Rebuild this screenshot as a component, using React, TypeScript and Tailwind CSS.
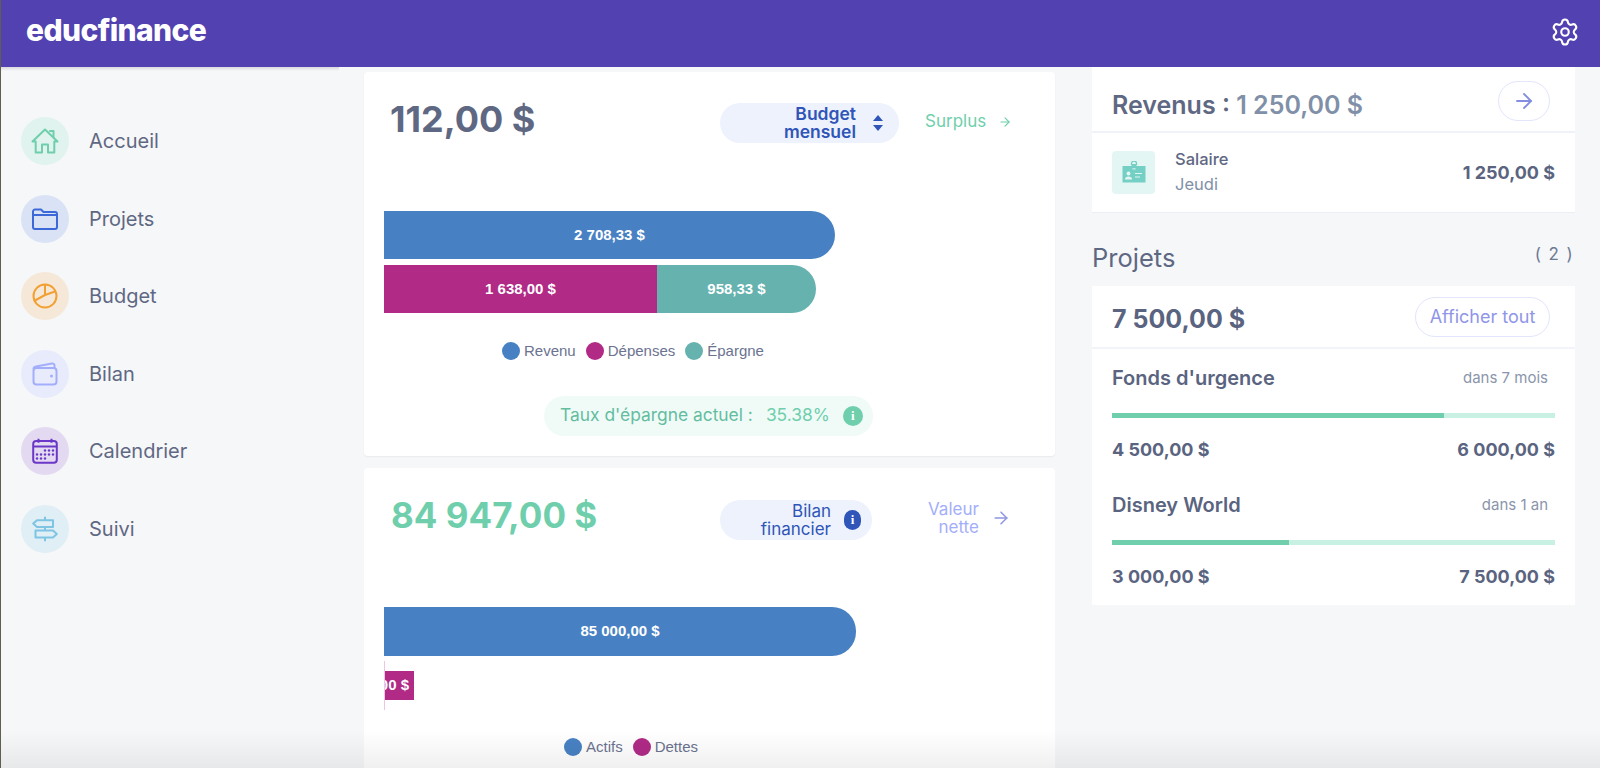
import { Settings, ArrowRight } from 'lucide-react';
import type { ReactNode } from 'react';

const HomeIcon = () => (
  <svg width="28" height="26" viewBox="0 0 28 26" fill="none" stroke="#6fcfac" strokeWidth="2" strokeLinejoin="round" strokeLinecap="round">
    <path d="M1.5 13.5 14 1.5l12.5 12h-3.2V24.5H17V16.5h-6v8H4.700V13.500z" />
    <path d="M19 3h3.500v6.500" />
  </svg>
);

const FolderIcon = () => (
  <svg width="26" height="22" viewBox="0 0 26 22" fill="none" stroke="#3d68d8" strokeWidth="2" strokeLinejoin="round">
    <path d="M1 3.500A2 2 0 0 1 3 1.500h6l2.500 2.500H23a2 2 0 0 1 2 2v13a2 2 0 0 1-2 2H3a2 2 0 0 1-2-2z" />
    <path d="M1 7h24" />
  </svg>
);

const PieIcon = () => (
  <svg width="26" height="26" viewBox="0 0 26 26" fill="none" stroke="#f2a033" strokeWidth="2" strokeLinejoin="round">
    <circle cx="13" cy="13" r="11.500" />
    <path d="M13 1.500V12L3 17.500" />
    <path d="M13 12l10-3.500" />
  </svg>
);

const WalletIcon = () => (
  <svg width="26" height="24" viewBox="0 0 26 24" fill="none" stroke="#a3aefb" strokeWidth="2" strokeLinejoin="round">
    <path d="M1.500 7.500A3 3 0 0 1 4 4.500L20 1.500c1.500-.2 2.500.7 2.500 2v2.500" />
    <rect x="1.500" y="6" width="23" height="16.500" rx="3" />
    <circle cx="19.500" cy="14" r="1.500" fill="#a3aefb" stroke="none" />
  </svg>
);

const CalendarIcon = () => (
  <svg width="26" height="26" viewBox="0 0 26 26" fill="none">
    <rect x="1.200" y="3" width="23.600" height="21.800" rx="3" stroke="#6a37c8" strokeWidth="2" />
    <path d="M1.500 8.500h23M6.500 .8v4M19.500 .8v4" stroke="#6a37c8" strokeWidth="2" />
    <g fill="#6a37c8">
      <circle cx="13" cy="12.500" r="1.200" />
      <circle cx="17" cy="12.500" r="1.200" />
      <circle cx="21" cy="12.500" r="1.200" />
      <circle cx="5" cy="16.500" r="1.200" />
      <circle cx="9" cy="16.500" r="1.200" />
      <circle cx="13" cy="16.500" r="1.200" />
      <circle cx="17" cy="16.500" r="1.200" />
      <circle cx="21" cy="16.500" r="1.200" />
      <circle cx="5" cy="20.500" r="1.200" />
      <circle cx="9" cy="20.500" r="1.200" />
      <circle cx="13" cy="20.500" r="1.200" />
    </g>
  </svg>
);

const SignIcon = () => (
  <svg width="26" height="26" viewBox="0 0 26 26" fill="none" stroke="#7fc4e3" strokeWidth="2" strokeLinejoin="round">
    <path d="M13 .8v3.400M13 11v3.500M13 21.500v3.700" />
    <path d="M21 4.200H5L1.200 7.600 5 11h16z" />
    <path d="M3.500 14.500H21l3.800 3.500-3.800 3.500H3.500z" />
  </svg>
);

const BadgeIcon = () => (
  <svg width="24" height="22" viewBox="0 0 24 22">
    <path d="M9.500 4V2.500a2.500 2.500 0 0 1 5 0V4" fill="none" stroke="#74cfc5" strokeWidth="1.300" />
    <rect x="0.500" y="5" width="23" height="16.500" fill="#74cfc5" />
    <rect x="9.500" y="3" width="5" height="3.400" fill="#74cfc5" />
    <rect x="10.400" y="7.400" width="3.200" height="1" fill="#e4f6f4" />
    <circle cx="6.500" cy="12.500" r="1.900" fill="#e4f6f4" />
    <path d="M3 18.500c0-2.200 1.500-3 3.500-3s3.500.8 3.500 3z" fill="#e4f6f4" />
    <path d="M13 12.500h7M13 16h5" stroke="#e4f6f4" strokeWidth="1.100" />
  </svg>
);

const InfoDot = ({ bg, w }: { bg: string; w: string }) => (
  <span className={`flex h-5 shrink-0 items-center justify-center rounded-full text-[13px] font-bold text-white font-['Liberation_Serif',serif] ${w} ${bg}`}>
    i
  </span>
);

const nav: { label: string; bg: string; icon: ReactNode }[] = [
  { label: 'Accueil', bg: 'bg-[#e0f3ee]', icon: <HomeIcon /> },
  { label: 'Projets', bg: 'bg-[#dae3f5]', icon: <FolderIcon /> },
  { label: 'Budget', bg: 'bg-[#f6e8d8]', icon: <PieIcon /> },
  { label: 'Bilan', bg: 'bg-[#e8ebfb]', icon: <WalletIcon /> },
  { label: 'Calendrier', bg: 'bg-[#e3daf1]', icon: <CalendarIcon /> },
  { label: 'Suivi', bg: 'bg-[#e0eff5]', icon: <SignIcon /> },
];

const LegendItem = ({ color, label }: { color: string; label: string }) => (
  <div className="flex items-center gap-[4px]">
    <span className={`h-[18px] w-[18px] rounded-full ${color}`} />
    <span className="font-['Liberation_Sans',sans-serif] text-[15px] text-[#6b7390]">{label}</span>
  </div>
);

const Goal = ({ name, when, start, end, pct, className }: { name: string; when: string; start: string; end: string; pct: number; className?: string }) => (
  <div className={className}>
    <div className="flex items-center justify-between pr-[7px]">
      <span className="text-[20px] font-semibold text-[#5a6480]">{name}</span>
      <span className="text-[15px] text-[#8b95ab]">{when}</span>
    </div>
    <div className="mt-[20px] h-[5px] bg-[#c8f0e3]">
      <div className="h-full bg-[#6fcfac]" style={{ width: `${pct}%` }} />
    </div>
    <div className="mt-[18px] flex items-center justify-between text-[18px] font-bold text-[#5a6480]">
      <span>{start}</span>
      <span>{end}</span>
    </div>
  </div>
);

const App = () => {
  return (
    <div className="relative flex h-screen flex-col overflow-hidden border-l border-l-[#5f5f50] bg-[#f6f7f9] font-['Inter',sans-serif]">
      {/* Header */}
      <header className="flex h-[67px] shrink-0 items-center justify-between bg-[#5241b0] pl-[25px] pr-[20px] text-white">
        <span className="mb-[7px] text-[30px] font-extrabold tracking-[-0.6px]">educfinance</span>
        <Settings className="mb-[3px] h-[30px] w-[30px]" strokeWidth={1.7} />
      </header>

      <div className="flex min-h-0 flex-1">
        {/* Sidebar */}
        <aside className="w-[338px] shrink-0">
          <div className="h-[4px] bg-gradient-to-b from-[#d8d9de] to-transparent" />
          <nav className="flex flex-col gap-[29.600px] pl-[20px] pt-[46px]">
            {nav.map((item) => (
              <div key={item.label} className="flex items-center gap-[20px]">
                <span className={`flex h-[48px] w-[48px] items-center justify-center rounded-full ${item.bg}`}>{item.icon}</span>
                <span className="text-[20px] text-[#5f6883]">{item.label}</span>
              </div>
            ))}
          </nav>
        </aside>

        {/* Center column */}
        <main className="ml-[25px] w-[691px] shrink-0 pt-[5px]">
          <section className="h-[384px] rounded-[4px] bg-white pt-[31px] shadow-[0_1px_2px_rgba(0,0,0,0.06)]">
            <div className="flex items-start">
              <div className="w-[356px] pl-[26px] text-[36px] leading-[32px] font-bold text-[#5f6883]">112,00 $</div>
              <div className="flex h-[40px] w-[179px] items-center justify-end gap-[17px] rounded-full bg-[#edf2fc] pr-[16px]">
                <span className="text-right text-[17.500px] leading-[18px] font-semibold text-[#2f55b8]">
                  Budget
                  <br />
                  mensuel
                </span>
                <span className="flex flex-col gap-[4px]">
                  <span className="h-0 w-0 border-x-[5.500px] border-b-[6px] border-x-transparent border-b-[#2f55b8]" />
                  <span className="h-0 w-0 border-x-[5.500px] border-t-[6px] border-x-transparent border-t-[#2f55b8]" />
                </span>
              </div>
              <div className="ml-[26px] flex h-[40px] items-center gap-[12px] pb-[3px] text-[17px] text-[#6fcfac]">
                Surplus
                <ArrowRight className="h-[14px] w-[14px]" strokeWidth={2} />
              </div>
            </div>

            <div className="ml-[20px] mt-[68px] flex flex-col gap-[6px] font-['Liberation_Sans',sans-serif] text-[15px] font-bold text-white">
              <div className="flex h-[48px] w-[451px] items-center justify-center rounded-r-[24px] bg-[#4881c3]">2 708,33 $</div>
              <div className="flex h-[48px] w-[432px]">
                <div className="flex w-[273px] items-center justify-center bg-[#b02a86]">1 638,00 $</div>
                <div className="flex flex-1 items-center justify-center rounded-r-[24px] bg-[#65b2af]">958,33 $</div>
              </div>
            </div>

            <div className="ml-[138px] mt-[27px] flex items-center gap-[10px]">
              <LegendItem color="bg-[#4881c3]" label="Revenu" />
              <LegendItem color="bg-[#b02a86]" label="Dépenses" />
              <LegendItem color="bg-[#65b2af]" label="Épargne" />
            </div>

            <div className="ml-[180px] mt-[33px] flex h-[40px] w-[329px] items-center rounded-full bg-[#f0fbf8] pl-[16px] text-[17.400px] text-[#64bda0]">
              <span>Taux d'épargne actuel :</span>
              <span className="ml-[13px] text-[#6fcfac]">35.38%</span>
              <span className="ml-[13px]">
                <InfoDot bg="bg-[#6fcfac]" w="w-[20px]" />
              </span>
            </div>
          </section>

          <section className="mt-[12px] h-[340px] rounded-[4px] bg-white pt-[32px]">
            <div className="flex items-start">
              <div className="w-[356px] pl-[27px] text-[35px] leading-[30px] font-bold text-[#6fcfac]">84 947,00 $</div>
              <div className="flex h-[40px] w-[152px] items-center justify-end gap-[13px] rounded-full bg-[#edf2fc] pr-[11px]">
                <span className="text-right text-[17px] leading-[18px] text-[#2f55b8]">
                  Bilan
                  <br />
                  financier
                </span>
                <InfoDot bg="bg-[#2f55b8]" w="w-[17px]" />
              </div>
              <div className="ml-[56px] flex h-[35px] items-center gap-[12px] text-[17px] leading-[18px] text-[#a3aefb]">
                <span className="text-right">
                  Valeur
                  <br />
                  nette
                </span>
                <ArrowRight className="h-[20px] w-[20px] text-[#8f96e0]" strokeWidth={1.800} />
              </div>
            </div>

            <div className="ml-[20px] mt-[67px] font-['Liberation_Sans',sans-serif] text-[15px] font-bold text-white">
              <div className="flex h-[49px] w-[472px] items-center justify-center rounded-r-[24px] bg-[#4881c3]">85 000,00 $</div>
              <div className="mt-[5px] flex h-[49px] items-center border-l border-l-[#f3c4e2]">
                <div className="flex h-[29px] w-[29px] items-center justify-end overflow-hidden whitespace-nowrap bg-[#b02a86] pr-[5px]">53,00 $</div>
              </div>
            </div>

            <div className="ml-[200px] mt-[26px] flex items-center gap-[10px]">
              <LegendItem color="bg-[#4881c3]" label="Actifs" />
              <LegendItem color="bg-[#b02a86]" label="Dettes" />
            </div>
          </section>
        </main>

        {/* Right column */}
        <div className="ml-[37px] w-[483px] shrink-0">
          <section className="border-b border-b-[#eceef5] bg-white">
            <div className="flex h-[66px] items-start justify-between border-b-2 border-b-[#f0f2fa] pl-[20px] pr-[25px] pt-[14px]">
              <span className="mt-[8px] text-[25px] leading-[32px] font-semibold text-[#5f6883]">
                Revenus : <span className="text-[#7f90a8]">1 250,00 $</span>
              </span>
              <span className="flex h-[40px] w-[52px] items-center justify-center rounded-full border-[1.500px] border-[#e2e5fb]">
                <ArrowRight className="h-[24px] w-[24px] text-[#838ee0]" strokeWidth={1.800} />
              </span>
            </div>
            <div className="flex h-[79px] items-center pb-[1px] pl-[20px] pr-[20px]">
              <span className="flex h-[43px] w-[43px] items-center justify-center rounded-[4px] bg-[#e4f6f4]">
                <BadgeIcon />
              </span>
              <div className="ml-[20px] flex flex-col gap-[4px]">
                <span className="text-[16.500px] leading-[21px] font-medium text-[#5f6883]">Salaire</span>
                <span className="text-[16.500px] leading-[21px] text-[#7f90a8]">Jeudi</span>
              </div>
              <span className="ml-auto text-[18px] font-bold text-[#5a6480]">1 250,00 $</span>
            </div>
          </section>

          <div className="flex h-[73px] items-start justify-between pr-[1px] pt-[28px]">
            <span className="mt-[1px] text-[25.500px] leading-[32px] text-[#5f6883]">Projets</span>
            <span className="mt-[-1px] text-[17px] leading-[28px] tracking-[1.400px] text-[#6e7a94]">( 2 )</span>
          </div>

          <section className="bg-white">
            <div className="flex h-[63px] items-center justify-between border-b-2 border-b-[#f3f4fa] pl-[20px] pr-[25px]">
              <span className="mt-[6px] text-[25px] font-bold text-[#5a6480]">7 500,00 $</span>
              <span className="flex h-[40px] w-[135px] items-center justify-center rounded-full border-[1.500px] border-[#e2e5fb] text-[18px] text-[#8f96e8]">Afficher tout</span>
            </div>
            <div className="px-[20px] pb-[15px] pt-[14px]">
              <Goal name="Fonds d'urgence" when="dans 7 mois" start="4 500,00 $" end="6 000,00 $" pct={75} />
              <Goal className="mt-[27px]" name="Disney World" when="dans 1 an" start="3 000,00 $" end="7 500,00 $" pct={40} />
            </div>
          </section>
        </div>
      </div>

      {/* Bottom fade */}
      <div className="pointer-events-none absolute inset-x-0 bottom-0 h-[38px] bg-gradient-to-b from-transparent to-black/6" />
    </div>
  );
};

export default App;
